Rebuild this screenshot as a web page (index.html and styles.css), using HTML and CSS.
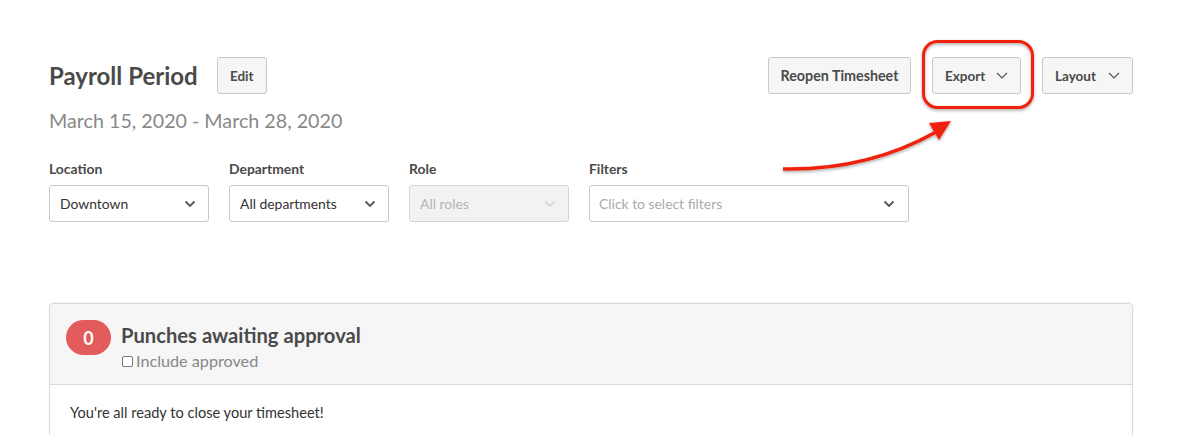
FILE: index.html
```html
<!DOCTYPE html>
<html>
<head>
<meta charset="utf-8">
<link rel="stylesheet" href="styles.css">
</head>
<body>
<div class="page">
  <div class="header">
    <div class="title-group">
      <h1 class="title">Payroll Period</h1>
      <button class="btn btn-edit">Edit</button>
    </div>
    <div class="actions">
      <button class="btn btn-reopen">Reopen Timesheet</button>
      <button class="btn btn-drop btn-export">Export
        <svg class="chev-thin" width="12" height="7" viewBox="0 0 12 7"><path d="M1 1l5 5 5-5" fill="none" stroke="#555" stroke-width="1.2"/></svg>
      </button>
      <button class="btn btn-drop btn-layout">Layout
        <svg class="chev-thin" width="12" height="7" viewBox="0 0 12 7"><path d="M1 1l5 5 5-5" fill="none" stroke="#555" stroke-width="1.2"/></svg>
      </button>
    </div>
  </div>
  <div class="dates">March 15, 2020 - March 28, 2020</div>

  <div class="filters">
    <div class="field w160">
      <label class="label">Location</label>
      <div class="select"><span>Downtown</span>
        <svg width="12" height="8" viewBox="0 0 12 8"><path d="M1.5 1.5l4.5 4.5 4.5-4.5" fill="none" stroke="#555" stroke-width="1.8"/></svg>
      </div>
    </div>
    <div class="field w160">
      <label class="label">Department</label>
      <div class="select"><span>All departments</span>
        <svg width="12" height="8" viewBox="0 0 12 8"><path d="M1.5 1.5l4.5 4.5 4.5-4.5" fill="none" stroke="#555" stroke-width="1.8"/></svg>
      </div>
    </div>
    <div class="field w160">
      <label class="label">Role</label>
      <div class="select disabled"><span>All roles</span>
        <svg width="12" height="8" viewBox="0 0 12 8"><path d="M1.5 1.5l4.5 4.5 4.5-4.5" fill="none" stroke="#d0d0d0" stroke-width="1.5"/></svg>
      </div>
    </div>
    <div class="field w320">
      <label class="label">Filters</label>
      <div class="select placeholder"><span>Click to select filters</span>
        <svg width="12" height="8" viewBox="0 0 12 8"><path d="M1.5 1.5l4.5 4.5 4.5-4.5" fill="none" stroke="#555" stroke-width="1.8"/></svg>
      </div>
    </div>
  </div>

  <div class="card">
    <div class="card-head">
      <div class="badge">0</div>
      <div class="head-text">
        <div class="card-title">Punches awaiting approval</div>
        <label class="check"><span class="box"></span>Include approved</label>
      </div>
    </div>
    <div class="card-body">You're all ready to close your timesheet!</div>
  </div>

  <svg class="annot" width="1181" height="435" viewBox="0 0 1181 435">
    <defs>
      <filter id="sh" x="-20%" y="-20%" width="140%" height="140%">
        <feDropShadow dx="0" dy="1.5" stdDeviation="1.5" flood-color="#000" flood-opacity="0.35"/>
      </filter>
    </defs>
    <g filter="url(#sh)">
      <rect x="923.5" y="41.5" width="109" height="66" rx="14" ry="14" fill="none" stroke="#f0220e" stroke-width="3"/>
      <path d="M783 169 C 840 170, 890 158, 936 132" fill="none" stroke="#f0220e" stroke-width="3.5"/>
      <path d="M951 121 L929 123 L939 140 Z" fill="#f0220e"/>
    </g>
  </svg>
</div>
</body>
</html>
```
FILE: styles.css
```css
* { box-sizing: border-box; }
html, body { margin: 0; padding: 0; background: #fff; }
body {
  font-family: "Lato", "Open Sans", sans-serif;
  color: #4a4a4a;
  width: 1181px;
  height: 435px;
  overflow: hidden;
}
.page {
  position: relative;
  padding: 57px 48px 0 49px;
}
.header {
  display: flex;
  justify-content: space-between;
  align-items: center;
  height: 37px;
}
.title-group {
  display: flex;
  align-items: center;
  gap: 19px;
}
.title {
  margin: 0;
  font-size: 24px;
  font-weight: 700;
  color: #4a4a4a;
  letter-spacing: 0;
}
.btn {
  height: 37px;
  border: 1px solid #c8c8c8;
  border-radius: 3px;
  background: #f6f6f6;
  font-family: inherit;
  font-size: 13.5px;
  font-weight: 700;
  color: #4a4a4a;
  padding: 0 12px;
  cursor: pointer;
}
.btn-edit { width: 50px; padding: 0; }
.actions { display: flex; gap: 21px; }
.btn-reopen { width: 143px; padding: 0; font-size: 14.3px; }
.btn-drop {
  display: flex;
  align-items: center;
  justify-content: space-between;
  padding: 0 12px 0 12px;
}
.btn-export { width: 89px; }
.btn-layout { width: 91px; }
.chev-thin { display: block; }
.dates {
  margin-top: 16px;
  font-size: 19.7px;
  color: #888;
  line-height: 22px;
}
.filters {
  display: flex;
  gap: 20px;
  margin-top: 29px;
}
.field { display: flex; flex-direction: column; }
.w160 { width: 160px; }
.w320 { width: 320px; }
.label {
  font-size: 13.9px;
  font-weight: 700;
  color: #4a4a4a;
  line-height: 16px;
  margin-bottom: 8px;
}
.select {
  height: 37px;
  border: 1px solid #c8c8c8;
  border-radius: 3px;
  display: flex;
  align-items: center;
  justify-content: space-between;
  padding: 0 12px 0 10px;
  font-size: 13.9px;
  color: #333;
  background: #fff;
}
.select.disabled { background: #f2f2f2; color: #b5b5b5; border-color: #d5d5d5; }
.select.placeholder { color: #aaa; padding-left: 9px; padding-right: 13px; }
.card {
  margin-top: 81px;
  border: 1px solid #d9d9d9;
  border-radius: 4px 4px 0 0;
  box-shadow: 0 -1px 1px rgba(0,0,0,0.05);
  width: 1084px;
}
.card-head {
  background: #f6f6f6;
  height: 81px;
  border-bottom: 1px solid #d9d9d9;
  display: flex;
  align-items: flex-start;
  padding: 16px 0 0 16px;
  border-radius: 4px 4px 0 0;
}
.badge {
  width: 45px;
  height: 35px;
  border-radius: 18px;
  background: #e35b5b;
  color: #fff;
  font-weight: 700;
  font-size: 18px;
  display: flex;
  align-items: center;
  justify-content: center;
}
.head-text { margin-left: 10px; }
.card-title {
  font-size: 20.2px;
  font-weight: 700;
  color: #4a4a4a;
  line-height: 24px;
  margin-top: 3px;
}
.check {
  display: flex;
  align-items: center;
  font-size: 16.2px;
  color: #888;
  line-height: 18px;
  margin-top: 5px;
}
.box {
  width: 11px;
  height: 11px;
  border: 1px solid #777;
  border-radius: 2px;
  margin-right: 3px;
  margin-left: 1px;
  background: #fff;
}
.card-body {
  padding: 19px 20px 30px 20px;
  font-size: 14.6px;
  color: #333;
  background: #fff;
}
.annot {
  position: absolute;
  left: 0;
  top: 0;
  pointer-events: none;
}
```
